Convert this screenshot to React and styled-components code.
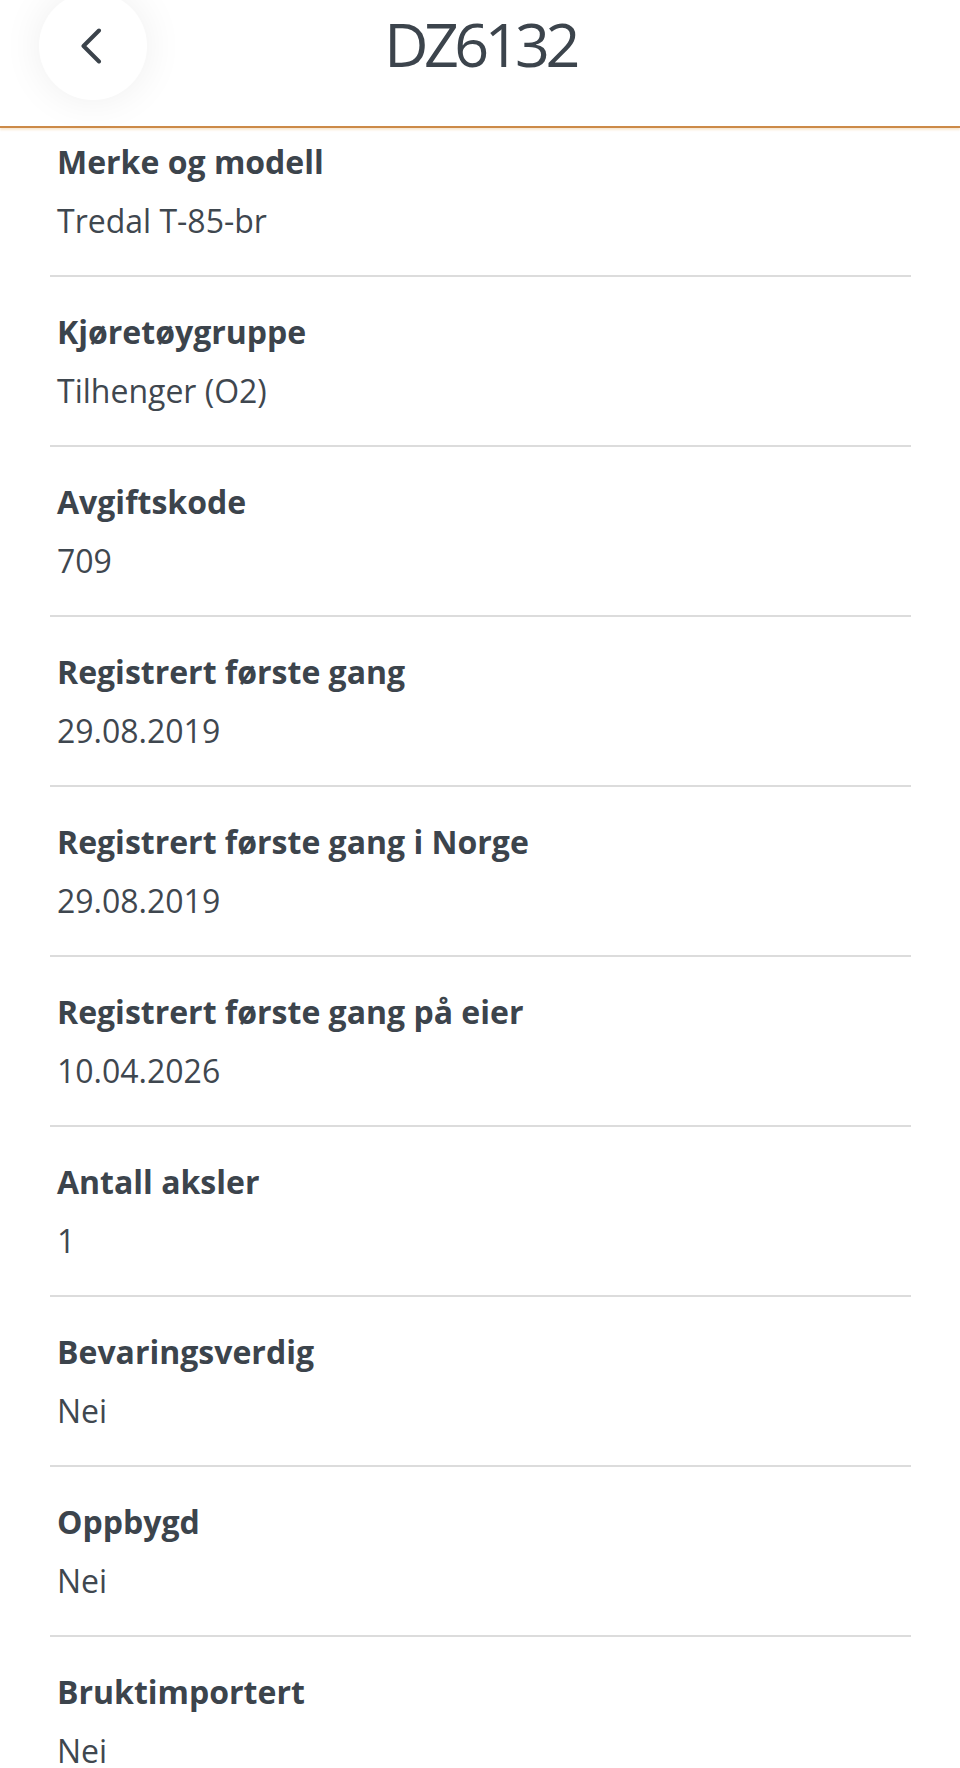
import React from 'react';
import styled, { createGlobalStyle } from 'styled-components';

const rows = [
  { label: 'Merke og modell', value: 'Tredal T-85-br' },
  { label: 'Kjøretøygruppe', value: 'Tilhenger (O2)' },
  { label: 'Avgiftskode', value: '709' },
  { label: 'Registrert første gang', value: '29.08.2019' },
  { label: 'Registrert første gang i Norge', value: '29.08.2019' },
  { label: 'Registrert første gang på eier', value: '10.04.2026' },
  { label: 'Antall aksler', value: '1' },
  { label: 'Bevaringsverdig', value: 'Nei' },
  { label: 'Oppbygd', value: 'Nei' },
  { label: 'Bruktimportert', value: 'Nei' },
];

const BackIcon = () => (
  <svg width="22" height="36" viewBox="0 0 22 36" fill="none">
    <path
      d="M19 2.5L3.5 18L19 33.5"
      stroke="#3b434b"
      strokeWidth="4"
      strokeLinecap="round"
      strokeLinejoin="round"
    />
  </svg>
);

const App = () => {
  return (
    <>
      <GlobalStyle />
      <Page>
        <Header>
          <BackButton aria-label="Tilbake">
            <BackIcon />
          </BackButton>
          <Title>DZ6132</Title>
        </Header>
        <List>
          {rows.map((row, i) => (
            <Row key={row.label} first={i === 0}>
              <Label>{row.label}</Label>
              <Value>{row.value}</Value>
            </Row>
          ))}
        </List>
      </Page>
    </>
  );
};
export default App;

const GlobalStyle = createGlobalStyle`
  html, body {
    margin: 0;
    padding: 0;
    background: #ffffff;
  }
  body {
    font-family: 'Open Sans', 'Noto Sans', sans-serif;
    color: #3c444c;
    overflow: hidden;
  }
`;

const Page = styled.div`
  width: 960px;
  min-height: 1768px;
  background: #ffffff;
`;

const Header = styled.header`
  position: relative;
  z-index: 1;
  display: grid;
  grid-template-columns: 1fr auto 1fr;
  align-items: start;
  height: 126px;
  border-bottom: 2px solid #cc8a48;
  box-shadow: 0 2px 2px rgba(236, 190, 130, 0.35);
  background: #ffffff;
`;

const BackButton = styled.button`
  justify-self: start;
  display: flex;
  align-items: center;
  justify-content: center;
  width: 108px;
  height: 108px;
  margin: -8px 0 0 39px;
  padding: 0 4px 0 0;
  border: none;
  border-radius: 50%;
  background: #ffffff;
  box-shadow: 0 0 40px rgba(0, 0, 0, 0.07);
  cursor: pointer;
`;

const Title = styled.h1`
  grid-column: 2;
  margin: 12px 0 0;
  font-family: 'Open Sans', 'Noto Sans', sans-serif;
  font-size: 61px;
  font-weight: 400;
  line-height: 64px;
  letter-spacing: -4.5px;
  color: #3c444c;
`;

const List = styled.div`
  display: flex;
  flex-direction: column;
  margin: 0 49px 0 50px;
`;

const Row = styled.div`
  display: flex;
  flex-direction: column;
  gap: 19px;
  padding: ${(p) => (p.first ? '14px' : '35px')} 0 34px 7px;
  border-bottom: 2px solid #dcdcdc;
`;

const Label = styled.div`
  font-size: 32px;
  font-weight: 700;
  line-height: 40px;
  color: #3c444c;
`;

const Value = styled.div`
  font-size: 32px;
  font-weight: 400;
  line-height: 40px;
  color: #3f474f;
`;
